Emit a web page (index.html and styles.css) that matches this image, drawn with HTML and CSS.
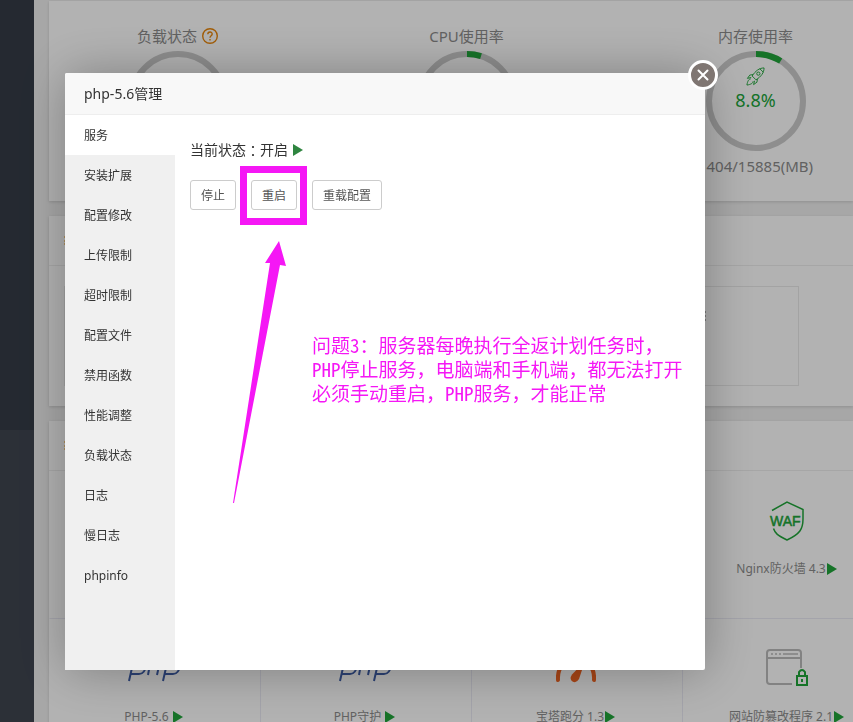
FILE: index.html
```html
<!DOCTYPE html>
<html lang="zh-CN">
<head>
<meta charset="utf-8">
<title>php-5.6管理</title>
<link rel="stylesheet" href="styles.css">
</head>
<body>
<div class="app">
  <aside class="sidebar"><div class="sidebar-menu"></div></aside>
  <main class="main">
    <section class="card gauges">
      <div class="gauge">
        <h3>负载状态 <svg class="help" viewBox="0 0 16 16"><circle cx="8" cy="8" r="7.3"/><path d="M5.8 6.3c0-3 4.4-3 4.4-.3 0 1.8-2.2 1.8-2.2 3.8M8 11v1.4"/></svg></h3>
        <div class="ring"><svg viewBox="0 0 100 100"><circle cx="50" cy="50" r="47"/></svg></div>
      </div>
      <div class="gauge">
        <h3>CPU使用率</h3>
        <div class="ring"><svg viewBox="0 0 100 100"><circle cx="50" cy="50" r="47"/><path d="M50 3a47 47 0 0 1 14 2.1"/></svg></div>
      </div>
      <div class="gauge">
        <h3>内存使用率</h3>
        <div class="ring"><svg viewBox="0 0 100 100"><circle cx="50" cy="50" r="47"/><path d="M50 3a47 47 0 0 1 24.700 7"/></svg>
          <div class="ring-value">
            <svg class="rocket" viewBox="0 0 20 20"><path d="M19 1c-5 0-9 3-12.500 8.500l4 4C16 10 19 6 19 1zM14.500 1.800l3.700 3.700M7.500 8 4 8.500 1.500 12l4-1M12 12.500l-.5 3.500L8 18.500l1-4M5 12.500c-2 0-3.500 2.500-4 6.500 4-.5 6.500-2 6.500-4"/><circle cx="13" cy="7" r="1.700"/></svg>
            <span>8.8%</span>
          </div>
        </div>
        <p>1404/15885(MB)</p>
      </div>
    </section>
    <section class="card">
      <header class="card-head"><svg class="mark" viewBox="0 0 10 14"><path d="M0 3h8M0 7h8M0 10h8"/></svg></header>
      <div class="overview-wrap">
        <div class="overview"><svg class="glyph" viewBox="0 0 10 10"><path d="M0 1h9M0 5h9M0 9h9"/></svg></div>
      </div>
    </section>
    <section class="card">
      <header class="card-head"><svg class="mark" viewBox="0 0 10 14"><path d="M0 3h8M0 7h8M0 10h8"/></svg></header>
      <div class="tiles">
        <div class="tile"></div><div class="tile"></div><div class="tile"></div>
        <div class="tile">
          <svg class="tile-icon" viewBox="0 0 40 40"><g class="green"><path d="M5 9.500 20 1l16 7.500V18c0 10-3 15-16 21C10 34 8 32 6.500 27.500"/></g><text x="3" y="25">WAF</text></svg>
          <div class="tile-label">Nginx防火墙 4.3<i class="play"></i></div>
        </div>
        <div class="tile">
          <svg class="tile-icon php" viewBox="0 0 60 40"><path d="M5 32 10 10h7c7 0 6 15-2 15H7M24 26 28 4M27 13c7-4 9-1 8 4l-2 9M39 32l5-22h7c7 0 6 15-2 15h-8"/></svg>
          <div class="tile-label">PHP-5.6 <i class="play"></i></div>
        </div>
        <div class="tile">
          <svg class="tile-icon php" viewBox="0 0 60 40"><path d="M5 32 10 10h7c7 0 6 15-2 15H7M24 26 28 4M27 13c7-4 9-1 8 4l-2 9M39 32l5-22h7c7 0 6 15-2 15h-8"/></svg>
          <div class="tile-label">PHP守护 <i class="play"></i></div>
        </div>
        <div class="tile">
          <svg class="tile-icon" viewBox="0 0 40 40"><path class="score" d="M2 31C0 3 40 3 38 31"/><path class="needle" d="M29 12 23 30q-3 5-6.500 2.500t-.5-7z"/></svg>
          <div class="tile-label">宝塔跑分 1.3<i class="play"></i></div>
        </div>
        <div class="tile">
          <svg class="tile-icon wide" viewBox="0 0 44 40"><g class="grey"><path d="M27 35H5q-3 0-3-3V4q0-3 3-3h28q3 0 3 3v15M2 9h34"/><path class="thin" d="M6 5h2M10 5h2M14 5h2M18 5h15"/></g><g class="green lock"><path d="M32 27h10v9H32zM34 27v-4q3-4 6 0v4M37 30v3"/></g></svg>
          <div class="tile-label">网站防篡改程序 2.1<i class="play"></i></div>
        </div>
      </div>
    </section>
  </main>
</div>
<div class="shade"></div>
<div class="modal" role="dialog" aria-labelledby="modal-title">
  <h2 class="modal-title" id="modal-title">php-5.6管理</h2>
  <button class="close" type="button" aria-label="关闭"><svg viewBox="0 0 12 12"><path d="M1.500 1.500l9 9M10.500 1.500l-9 9"/></svg></button>
  <div class="modal-body">
    <nav class="menu">
      <a class="active" href="#">服务</a>
      <a href="#">安装扩展</a>
      <a href="#">配置修改</a>
      <a href="#">上传限制</a>
      <a href="#">超时限制</a>
      <a href="#">配置文件</a>
      <a href="#">禁用函数</a>
      <a href="#">性能调整</a>
      <a href="#">负载状态</a>
      <a href="#">日志</a>
      <a href="#">慢日志</a>
      <a href="#">phpinfo</a>
    </nav>
    <div class="panel">
      <p class="status">当前状态<span class="colon">：</span>开启 <i class="play"></i></p>
      <div class="buttons">
        <button type="button">停止</button>
        <div class="marked"><button type="button">重启</button></div>
        <button type="button">重载配置</button>
      </div>
    </div>
  </div>
  <svg class="arrow" viewBox="0 0 54 263"><path d="M46 0 53 25 47 24 1 262H0L37 22 32 22z"/></svg>
  <p class="note">问题<span>3</span>：服务器每晚执行全返计划任务时，<br><span>PHP</span>停止服务，电脑端和手机端，都无法打开<br>必须手动重启，<span>PHP</span>服务，才能正常</p>
</div>
</body>
</html>
```

FILE: styles.css
```css
* { box-sizing: border-box; }
body {
  margin: 0;
  overflow: hidden;
  background: #f0f0f0;
  color: #666;
  font: 12px/20px "Noto Sans", "Noto Sans CJK SC", sans-serif;
}
h2, h3, p { margin: 0; font-weight: 400; }
svg { fill: none; display: block; }

.app { display: flex; height: 100vh; overflow: hidden; }
.sidebar { flex: 0 0 34px; background: #3f4550; }
.sidebar-menu { height: 430px; background: #353c47; }
.main { flex: 1; min-width: 0; padding: 1px 0 0 15px; }
.card {
  margin-bottom: 15px;
  background: #fff;
  box-shadow: 0 1px 3px rgba(0, 0, 0, .15);
}

.gauges {
  display: grid;
  grid-template-columns: repeat(3, minmax(289px, 1fr));
  height: 200px;
  padding-top: 25px;
}
.gauge {
  display: flex;
  flex-direction: column;
  align-items: center;
  margin-left: -16px;
  margin-right: 16px;
  color: #8c8c8c;
}
.gauge h3 { display: flex; align-items: center; gap: 5px; font-size: 15px; line-height: 20px; }
.help { width: 16px; height: 16px; stroke: #e8860c; stroke-width: 1.4; }
.ring { position: relative; width: 100px; height: 100px; margin-top: 5px; }
.ring svg { stroke: #ccc; stroke-width: 6; }
.ring path { stroke: #20a53a; }
.ring-value {
  position: absolute;
  inset: 0;
  padding-top: 16px;
  display: flex;
  flex-direction: column;
  align-items: center;
  color: #20a53a;
  font-size: 18px;
  line-height: 24px;
}
.ring .rocket { width: 19px; height: 19px; margin-bottom: 2px; stroke: #20a53a; stroke-width: 1; }
.gauge p { margin-top: 5px; font-size: 15px; line-height: 20px; }

.card-head { display: flex; align-items: center; height: 50px; padding-left: 15px; border-bottom: 1px solid #eee; }
.mark { width: 10px; height: 14px; stroke: #f39c12; }
.overview-wrap { padding: 20px 15px; }
.overview {
  display: flex;
  justify-content: flex-end;
  width: 735px;
  height: 100px;
  padding: 24px 91px 0 0;
  border: 1px solid #eaeaea;
}
.glyph { width: 10px; height: 10px; stroke: #666; }

.tiles { display: grid; grid-template-columns: repeat(4, minmax(211px, 1fr)); }
.tile {
  display: flex;
  flex-direction: column;
  align-items: center;
  height: 148px;
  padding: 30px 3px 0 0;
  border-left: 1px solid #ebebf5;
  border-bottom: 1px solid #ebebf5;
}
.tile:nth-child(4n+1) { border-left-color: transparent; }
.tile-icon { width: 40px; height: 40px; }
.tile-icon.php { width: 60px; }
.tile-icon.wide { width: 44px; }
.tile-icon text {
  fill: #20a53a;
  stroke: #20a53a;
  stroke-width: .5;
  font: 14px "Liberation Sans", sans-serif;
}
.green { stroke: #20a53a; stroke-width: 1.5; }
.lock { stroke-width: 2; }
.grey { stroke: #bbb; stroke-width: 2; }
.thin { stroke-width: 1.5; }
.php path { stroke: #3f5fa8; stroke-width: 2; }
.score { stroke: #f26522; stroke-width: 4; stroke-linecap: round; }
.needle { fill: #f26522; }
.tile-label { display: flex; align-items: center; margin-top: 18px; color: #8c8c8c; white-space: pre; }
.play {
  width: 0;
  height: 0;
  margin-left: 1px;
  border-left: 10px solid #20a53a;
  border-top: 6px solid transparent;
  border-bottom: 6px solid transparent;
}

.shade { position: fixed; inset: 0; background: rgba(0, 0, 0, .3); }
.modal {
  position: fixed;
  top: 73px;
  left: 65px;
  width: 75vw;
  border-radius: 2px;
  background: #fff;
  box-shadow: 1px 1px 50px rgba(0, 0, 0, .3);
}
.modal-title {
  height: 42px;
  padding-left: 19px;
  border-bottom: 1px solid #eee;
  border-radius: 2px 2px 0 0;
  background: #f8f8f8;
  color: #333;
  font-size: 14px;
  line-height: 42px;
}
.close {
  position: absolute;
  top: -13px;
  right: -13px;
  display: flex;
  align-items: center;
  justify-content: center;
  width: 30px;
  height: 30px;
  padding: 0;
  border: 3px solid #fff;
  border-radius: 50%;
  background: #7f7672;
}
.close svg { width: 12px; height: 12px; stroke: #fff; stroke-width: 2; stroke-linecap: round; }
.modal-body { display: flex; min-height: 555px; }
.menu { flex: 0 0 110px; background: #f0f0f0; }
.menu a {
  display: block;
  height: 40px;
  padding-left: 19px;
  color: #333;
  line-height: 42px;
  text-decoration: none;
}
.menu .active { background: #fff; }
.panel { flex: 1; padding: 25px 15px; }
.status { display: flex; align-items: center; color: #333; font-size: 14px; white-space: pre; }
.status .play { border-left-color: #2f8540; }
.colon { font-family: "Noto Sans CJK TC", sans-serif; }
.buttons { display: flex; gap: 15px; margin-top: 20px; }
.buttons button {
  display: block;
  height: 30px;
  padding: 2px 10px 0;
  border: 1px solid #ccc;
  border-radius: 3px;
  background: #fff;
  color: #555;
  font: inherit;
}
.marked { position: relative; }
.marked::after {
  content: "";
  position: absolute;
  inset: -14px -10px -15px -11px;
  border: 7px solid #f517f5;
  pointer-events: none;
}
.arrow { position: absolute; top: 168px; left: 168px; width: 54px; height: 263px; fill: #f517f5; }
.note {
  position: absolute;
  top: 260px;
  left: 247px;
  color: #f517f5;
  font-size: 19px;
  line-height: 24px;
  font-family: "Noto Sans CJK SC", sans-serif;
  white-space: nowrap;
}
.note span { font-feature-settings: "hwid"; }
```
